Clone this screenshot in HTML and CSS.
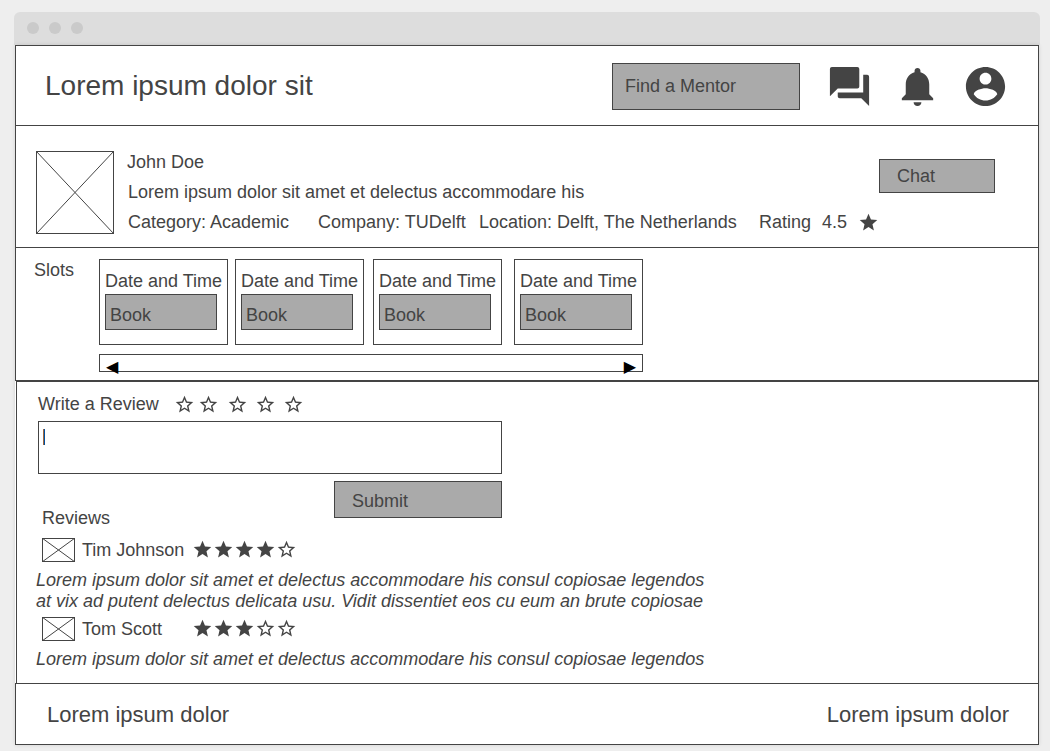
FILE: index.html
```html
<!DOCTYPE html>
<html lang="en">
<head>
<meta charset="utf-8">
<meta name="viewport" content="width=device-width, initial-scale=1">
<title>Mentor profile</title>
<link rel="stylesheet" href="styles.css">
</head>
<body>
<svg class="symbols" aria-hidden="true">
  <symbol id="star" viewBox="0 0 24 24"><path d="M12 17.27L18.18 21l-1.64-7.03L22 9.24l-7.19-.61L12 2 9.19 8.63 2 9.24l5.46 4.73L5.82 21z"/></symbol>
  <symbol id="star-empty" viewBox="0 0 24 24"><path d="M22 9.24l-7.19-.62L12 2 9.19 8.63 2 9.24l5.46 4.73L5.82 21 12 17.27 18.18 21l-1.63-7.03L22 9.24zM12 15.4l-3.76 2.27 1-4.28-3.32-2.88 4.38-.38L12 6.1l1.71 4.04 4.38.38-3.32 2.88 1 4.28L12 15.4z"/></symbol>
  <symbol id="forum" viewBox="0 0 24 24"><path d="M21 6h-2v9H6v2c0 .55.45 1 1 1h11l4 4V7c0-.55-.45-1-1-1zm-4 6V3c0-.55-.45-1-1-1H3c-.55 0-1 .45-1 1v14l4-4h10c.55 0 1-.45 1-1z"/></symbol>
  <symbol id="bell" viewBox="0 0 24 24"><path d="M12 22c1.1 0 2-.9 2-2h-4c0 1.1.89 2 2 2zm6-6v-5c0-3.07-1.64-5.64-4.5-6.32V4c0-.83-.67-1.5-1.5-1.5s-1.5.67-1.5 1.5v.68C7.63 5.36 6 7.92 6 11v5l-2 2v1h16v-1l-2-2z"/></symbol>
  <symbol id="account" viewBox="0 0 24 24"><path d="M12 2C6.48 2 2 6.48 2 12s4.48 10 10 10 10-4.48 10-10S17.52 2 12 2zm0 3c1.66 0 3 1.34 3 3s-1.34 3-3 3-3-1.34-3-3 1.34-3 3-3zm0 14.2c-2.5 0-4.71-1.28-6-3.22.03-1.99 4-3.08 6-3.08 1.99 0 5.97 1.09 6 3.08-1.29 1.94-3.5 3.22-6 3.22z"/></symbol>
</svg>
<div class="window">
  <div class="titlebar"><span class="dot"></span><span class="dot"></span><span class="dot"></span></div>
  <div class="page">
    <header class="header">
      <h1 class="brand">Lorem ipsum dolor sit</h1>
      <nav class="actions">
        <button class="button find" type="button">Find a Mentor</button>
        <button class="icon-button" type="button" aria-label="Messages"><svg class="icon"><use href="#forum"/></svg></button>
        <button class="icon-button" type="button" aria-label="Notifications"><svg class="icon"><use href="#bell"/></svg></button>
        <button class="icon-button" type="button" aria-label="Account"><svg class="icon"><use href="#account"/></svg></button>
      </nav>
    </header>

    <section class="profile">
      <svg class="photo"><rect class="frame" width="100%" height="100%"/><line x1="0" y1="0" x2="100%" y2="100%"/><line x1="100%" y1="0" x2="0" y2="100%"/></svg>
      <div class="details">
        <h2 class="name">John Doe</h2>
        <p class="bio">Lorem ipsum dolor sit amet et delectus accommodare his</p>
        <div class="facts">
          <span>Category: Academic</span>
          <span>Company: TUDelft</span>
          <span>Location: Delft, The Netherlands</span>
          <span>Rating</span>
          <span>4.5</span>
          <svg class="star"><use href="#star"/></svg>
        </div>
      </div>
      <button class="button chat" type="button">Chat</button>
    </section>

    <section class="slots">
      <h2 class="label">Slots</h2>
      <div class="slot-area">
        <div class="slot-list">
          <article class="slot"><p>Date and Time</p><button class="button book" type="button">Book</button></article>
          <article class="slot"><p>Date and Time</p><button class="button book" type="button">Book</button></article>
          <article class="slot"><p>Date and Time</p><button class="button book" type="button">Book</button></article>
          <article class="slot"><p>Date and Time</p><button class="button book" type="button">Book</button></article>
        </div>
        <div class="scroller">
          <button class="arrow" type="button" aria-label="Previous slots">◀</button>
          <button class="arrow" type="button" aria-label="Next slots">▶</button>
        </div>
      </div>
    </section>

    <section class="reviews">
      <form class="review-form">
        <div class="prompt">
          <label for="review">Write a Review</label>
          <div class="rate" role="radiogroup" aria-label="Rating">
            <label class="choice"><input type="radio" name="rating" value="1" aria-label="1 star"><svg class="star"><use href="#star-empty"/></svg></label>
            <label class="choice"><input type="radio" name="rating" value="2" aria-label="2 stars"><svg class="star"><use href="#star-empty"/></svg></label>
            <label class="choice"><input type="radio" name="rating" value="3" aria-label="3 stars"><svg class="star"><use href="#star-empty"/></svg></label>
            <label class="choice"><input type="radio" name="rating" value="4" aria-label="4 stars"><svg class="star"><use href="#star-empty"/></svg></label>
            <label class="choice"><input type="radio" name="rating" value="5" aria-label="5 stars"><svg class="star"><use href="#star-empty"/></svg></label>
          </div>
        </div>
        <div class="editor">
          <textarea class="review-text" id="review"></textarea>
          <span class="caret"></span>
        </div>
        <button class="button submit" type="button">Submit</button>
      </form>
      <h2 class="reviews-title">Reviews</h2>
      <article class="review">
        <div class="reviewer">
          <svg class="thumb"><rect class="frame" width="100%" height="100%"/><line x1="0" y1="0" x2="100%" y2="100%"/><line x1="100%" y1="0" x2="0" y2="100%"/></svg>
          <h3 class="reviewer-name">Tim Johnson</h3>
          <div class="score" role="img" aria-label="4 of 5 stars"><svg class="star"><use href="#star"/></svg><svg class="star"><use href="#star"/></svg><svg class="star"><use href="#star"/></svg><svg class="star"><use href="#star"/></svg><svg class="star"><use href="#star-empty"/></svg></div>
        </div>
        <p class="comment">Lorem ipsum dolor sit amet et delectus accommodare his consul copiosae legendos<br>at vix ad putent delectus delicata usu. Vidit dissentiet eos cu eum an brute copiosae</p>
      </article>
      <article class="review">
        <div class="reviewer">
          <svg class="thumb"><rect class="frame" width="100%" height="100%"/><line x1="0" y1="0" x2="100%" y2="100%"/><line x1="100%" y1="0" x2="0" y2="100%"/></svg>
          <h3 class="reviewer-name">Tom Scott</h3>
          <div class="score" role="img" aria-label="3 of 5 stars"><svg class="star"><use href="#star"/></svg><svg class="star"><use href="#star"/></svg><svg class="star"><use href="#star"/></svg><svg class="star"><use href="#star-empty"/></svg><svg class="star"><use href="#star-empty"/></svg></div>
        </div>
        <p class="comment">Lorem ipsum dolor sit amet et delectus accommodare his consul copiosae legendos</p>
      </article>
    </section>

    <footer class="footer"><span>Lorem ipsum dolor</span><span>Lorem ipsum dolor</span></footer>
  </div>
</div>
</body>
</html>
```
FILE: styles.css
```css
* { box-sizing: border-box; }

body {
  margin: 0;
  padding: 12px 10px 6px 14px;
  background: #eeeeee;
  color: #444444;
  font: 18px/21px "Liberation Sans", Arial, sans-serif;
}

h1, h2, h3, p { margin: 0; font-size: inherit; font-weight: normal; }
button, textarea { margin: 0; font: inherit; color: inherit; border-radius: 0; }
svg { display: block; fill: currentColor; }
.symbols { position: absolute; width: 0; height: 0; }

.titlebar {
  display: flex;
  gap: 10px;
  height: 33px;
  padding: 10px 13px;
  background: #dddddd;
  border-radius: 6px 6px 0 0;
}
.dot { width: 12px; height: 12px; border-radius: 50%; background: #cacaca; }

.page {
  margin: 0 1px;
  background: #ffffff;
  border: 1px solid #444444;
  border-left: 0;
  box-shadow: 0 0 4px rgba(0, 0, 0, 0.12);
}
.header, .profile, .slots, .reviews, .footer { border-left: 1px solid #444444; }

.button {
  padding: 0 12px;
  background: #aaaaaa;
  border: 1px solid #444444;
  text-align: left;
}

.header {
  display: flex;
  align-items: center;
  justify-content: space-between;
  padding: 17px 29px 15px;
  border-bottom: 1px solid #444444;
}
.brand { padding-bottom: 2px; font-size: 28px; line-height: 32px; }
.actions { display: flex; gap: 21px; }
.find { width: 188px; height: 47px; margin-right: 5px; }
.icon-button { padding: 0; border: 0; background: none; }
.icon { width: 47px; height: 47px; }

.profile {
  display: flex;
  align-items: flex-start;
  padding: 21px 43px 10px 20px;
  border-bottom: 1px solid #444444;
}
.photo, .thumb { flex: none; stroke: #444444; fill: none; }
.frame { stroke-width: 2; }
.photo { width: 78px; height: 83px; margin-top: 4px; }
.details { flex: 1; margin-left: 13px; line-height: 30px; }
.bio, .facts { margin-left: 1px; }
.facts {
  display: grid;
  grid-template-columns: 190px 161px 280px 63px 36px 21px;
  align-items: center;
  white-space: nowrap;
}
.star { width: 21px; height: 21px; }
.chat { width: 117px; height: 34px; margin-top: 12px; padding: 0 17px; }

.slots {
  display: flex;
  padding: 11px 18px 8px;
  border-bottom: 1px solid #444444;
}
.label { width: 65px; padding-top: 1px; }
.slot-area { width: 544px; }
.slot-list { display: grid; grid-template-columns: 136px 138px 141px 129px; }
.slot {
  width: 129px;
  height: 86px;
  padding: 11px 0 0 5px;
  border: 1px solid #444444;
  white-space: nowrap;
}
.book { width: 112px; height: 36px; margin-top: 2px; padding: 7px 4px 0; }
.scroller {
  display: flex;
  align-items: center;
  justify-content: space-between;
  height: 18px;
  margin-top: 9px;
  padding: 8px 6px 0;
  border: 1px solid #444444;
}
.arrow { padding: 0; border: 0; background: none; color: #000000; font: 16px/16px "DejaVu Sans", sans-serif; }

.reviews {
  margin-left: 1px;
  padding: 12px 19px 8px;
  border-top: 1px solid #444444;
}
.review-form { width: 464px; margin-left: 2px; }
.prompt { display: flex; gap: 15px; }
.rate { display: grid; grid-template-columns: 24px 29px 28px 28px 21px; height: 19px; align-items: center; }
.choice { position: relative; width: 21px; }
.choice input { position: absolute; inset: 0; width: 21px; height: 21px; margin: 0; opacity: 0; }
.editor { position: relative; margin-top: 6px; }
.review-text {
  display: block;
  width: 100%;
  height: 53px;
  padding: 5px 4px;
  background: #ffffff;
  border: 1px solid #444444;
  resize: none;
}
.caret { position: absolute; top: 8px; left: 5px; width: 2px; height: 16px; background: #0050a0; border-left: 1px solid #a06840; }
.submit { display: block; width: 168px; height: 37px; margin: 7px 0 0 auto; padding: 3px 17px 0; }
.reviews-title { margin: -10px 0 9px 6px; }
.reviewer { display: flex; align-items: center; margin-left: 6px; }
.thumb { width: 33px; height: 24px; }
.reviewer-name { width: 110px; margin-left: 7px; }
.score { display: flex; padding-bottom: 2px; }
.comment { margin: 8px 0 5px; font-style: italic; }

.footer {
  display: flex;
  justify-content: space-between;
  padding: 18px 29px 17px 31px;
  border-top: 1px solid #444444;
  font-size: 22px;
  line-height: 25px;
}
```
